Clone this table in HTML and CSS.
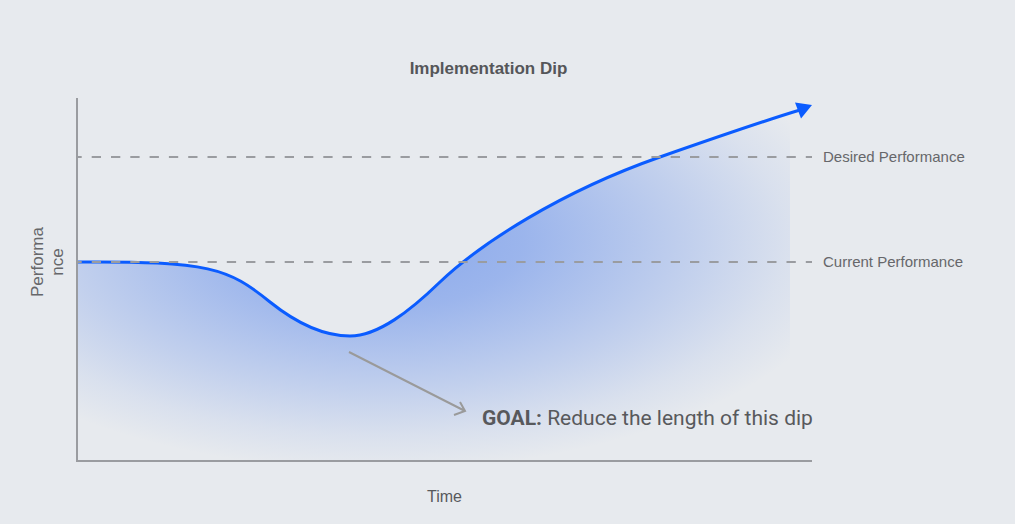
FILE: index.html
```html
<!DOCTYPE html>
<html lang="en">
<head>
<meta charset="utf-8">
<title>Implementation Dip</title>
<link rel="stylesheet" href="styles.css">
</head>
<body>
<figure class="chart">
  <h1 class="chart-title">Implementation Dip</h1>
  <div class="y-label"><span class="y-label-text">Performa<br>nce</span></div>
  <svg class="plot" viewBox="77 90 938 380" width="938" height="380" xmlns="http://www.w3.org/2000/svg">
    <defs>
      <radialGradient id="dipGlow" gradientUnits="userSpaceOnUse" cx="380" cy="240" r="480" gradientTransform="translate(380 240) scale(1 0.48) translate(-380 -240)">
        <stop offset="0" stop-color="#3f74ea" stop-opacity="0.56"/>
        <stop offset="0.3" stop-color="#3f74ea" stop-opacity="0.45"/>
        <stop offset="0.65" stop-color="#3f74ea" stop-opacity="0.22"/>
        <stop offset="0.85" stop-color="#3f74ea" stop-opacity="0.08"/>
        <stop offset="1" stop-color="#3f74ea" stop-opacity="0"/>
      </radialGradient>
      <clipPath id="plotClip"><rect x="78" y="90" width="712" height="370"/></clipPath>
    </defs>
    <path class="area" clip-path="url(#plotClip)" d="M77,262 C210,261 228,268 270,302 C300,326 325,336 350,336 C378,336 410,311 440,282 C480,244 560,192 660,157 C700,143 760,122 800,110 L800,461 L77,461 Z"/>
    <path class="curve" d="M77,262 C210,261 228,268 270,302 C300,326 325,336 350,336 C378,336 410,311 440,282 C480,244 560,192 660,157 C700,143 760,122 800,110"/>
    <polygon class="curve-head" points="812,105 795,102.5 801,118.5"/>
    <line class="ref-line" x1="77" y1="157" x2="812" y2="157"/>
    <line class="ref-line" x1="77" y1="262" x2="812" y2="262"/>
    <text class="ref-label" x="823" y="162">Desired Performance</text>
    <text class="ref-label" x="823" y="267">Current Performance</text>
    <line class="axis" x1="77" y1="98" x2="77" y2="462"/>
    <line class="axis" x1="76" y1="461" x2="812" y2="461"/>
    <path class="goal-arrow" d="M349,352 L465,411 M460,402 L465,411 L454,415"/>
    <text class="goal" x="482" y="425"><tspan class="goal-key">GOAL:</tspan> Reduce the length of this dip</text>
  </svg>
  <div class="x-label">Time</div>
</figure>
</body>
</html>
```

FILE: styles.css
```css
html, body {
  margin: 0;
  padding: 0;
}

body {
  background: #e7eaee;
  font-family: "Liberation Sans", Arial, sans-serif;
}

.chart {
  margin: 0;
  width: 1015px;
  height: 524px;
  display: grid;
  grid-template-columns: 77px 735px 203px;
  grid-template-rows: 90px 380px 54px;
}

.chart-title {
  grid-column: 1 / -1;
  grid-row: 1;
  margin: 0;
  padding: 59px 38px 0 0;
  font-size: 17px;
  line-height: 20px;
  font-weight: bold;
  color: #555659;
  text-align: center;
}

.y-label {
  grid-column: 1;
  grid-row: 2;
  display: flex;
  justify-content: center;
  align-items: flex-start;
  padding: 152px 0 0 18px;
}

.y-label-text {
  display: block;
  flex: none;
  width: 80px;
  height: 40px;
  font-size: 17px;
  line-height: 20px;
  text-align: center;
  color: #66676a;
  transform: rotate(-90deg);
}

.plot {
  grid-column: 2 / 4;
  grid-row: 2;
  display: block;
  overflow: visible;
}

.area {
  fill: url(#dipGlow);
}

.curve {
  fill: none;
  stroke: #0b5cff;
  stroke-width: 3;
}

.curve-head {
  fill: #0b5cff;
}

.ref-line {
  stroke: #9a9ca0;
  stroke-width: 2;
  stroke-dasharray: 9.3 10;
  stroke-dashoffset: 4.6;
}

.ref-label {
  font-family: "Liberation Sans", Arial, sans-serif;
  font-size: 15px;
  fill: #66676a;
}

.axis {
  stroke: #9a9ca0;
  stroke-width: 2;
}

.goal-arrow {
  fill: none;
  stroke: #9a9a9a;
  stroke-width: 2;
}

.goal {
  font-family: Roboto, "Liberation Sans", sans-serif;
  font-size: 21px;
  fill: #58595c;
}

.goal-key {
  font-weight: 700;
}

.x-label {
  grid-column: 2;
  grid-row: 3;
  padding-top: 17px;
  font-size: 16px;
  line-height: 20px;
  text-align: center;
  color: #58595c;
}
```
